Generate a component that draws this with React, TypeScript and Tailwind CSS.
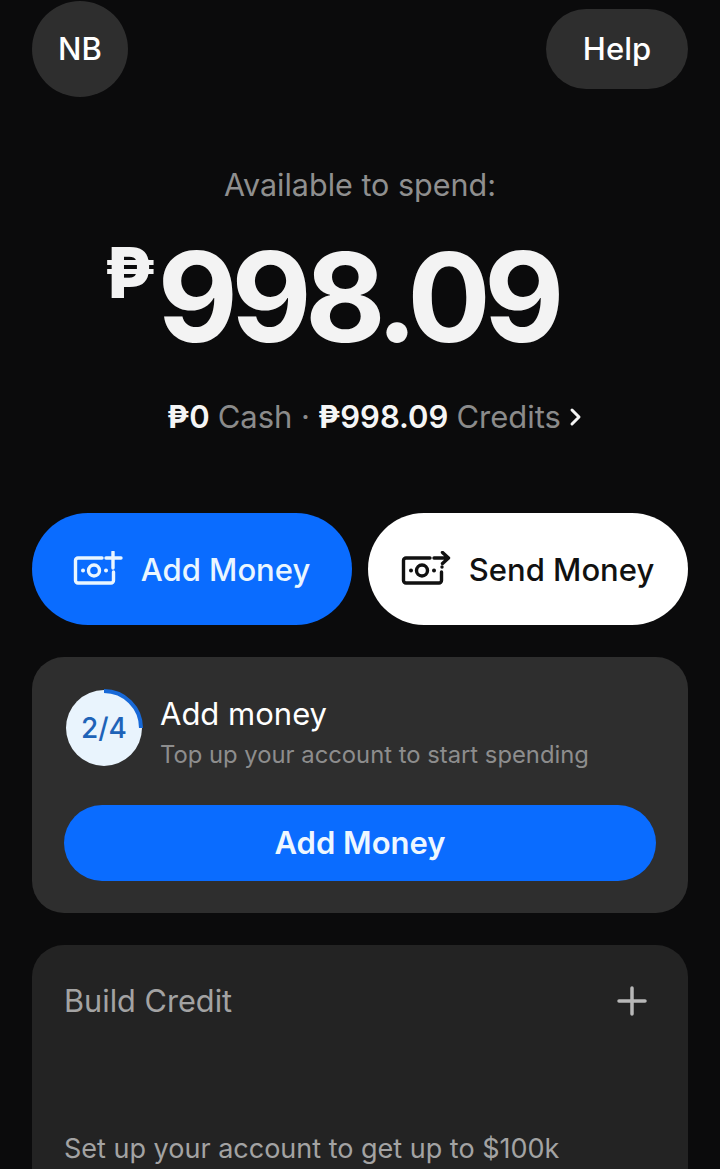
const sans = "font-['Inter','Noto_Sans',sans-serif]";

const MoneyIcon = ({ kind }: { kind: "plus" | "send" }) => (
  <svg width="50" height="36" viewBox="0 0 50 36" fill="none" stroke="currentColor" strokeWidth="3.400" strokeLinecap="round" strokeLinejoin="round">
    <path d="M29 7H5a2.500 2.500 0 0 0-2.500 2.500v20A2.500 2.500 0 0 0 5 32h33a2.500 2.500 0 0 0 2.500-2.500V21" />
    <circle cx="21" cy="19.500" r="5.500" />
    <path d="M10 19.500h.01M33 19.500h.01" strokeWidth="4" />
    {kind === "plus" ? (
      <path d="M33 7h15M40 1v16" />
    ) : (
      <>
        <path d="M33 7h14M41.500 1.500l6 5.500-6 5.500" />
        <path d="M41 16h.01" strokeWidth="3.400" />
      </>
    )}
  </svg>
);

const Peso = ({ className = "" }: { className?: string }) => (
  <span className={className}>₱</span>
);

export default function App() {
  return (
    <div className={`${sans} relative h-[1169px] w-[720px] overflow-hidden bg-[#0b0b0c] px-8`}>
      <div className="flex items-start justify-between pt-px">
        <div className="flex h-[96px] w-[96px] items-center justify-center rounded-full bg-[#2e2e2e] text-[31px] font-[540] text-white">NB</div>
        <div className="mt-2 flex h-[80px] w-[142px] items-center justify-center rounded-full bg-[#2e2e2e] text-[31px] font-[540] text-white">Help</div>
      </div>

      <p className="mt-[66px] text-center text-[30.500px] leading-[44px] text-[#8f8f8f]">Available to spend:</p>

      <div className="mt-[18px] flex h-[136px] items-start pl-[72px]">
        <span className="mt-[12px] text-[70px] leading-[72px] font-extrabold text-[#f3f3f3]">₱</span>
        <span className="mt-[4px] ml-[2px] text-[124px] leading-[136px] font-bold tracking-[-6.800px] text-[#f3f3f3]">998.09</span>
      </div>

      <div className="mt-[34px] flex items-center pl-[135px] text-[31px] leading-[44px] text-[#8b8b8b]">
        <Peso className="font-bold text-[#f5f5f5]" />
        <span className="font-semibold text-[#f5f5f5]">0</span>
        <span className="ml-2">Cash ·</span>
        <span className="ml-2 font-semibold text-[#f5f5f5]"><Peso className="font-bold" />998.09</span>
        <span className="ml-2">Credits</span>
        <svg className="ml-2" width="14" height="20" viewBox="0 0 14 20" fill="none" stroke="#f5f5f5" strokeWidth="3" strokeLinecap="round" strokeLinejoin="round">
          <path d="M3 3l7 7-7 7" />
        </svg>
      </div>

      <div className="mt-[74px] flex gap-4">
        <div className="flex h-[112px] w-[320px] items-center justify-center gap-[18px] rounded-full bg-[#0a6cff] pr-[1px] text-[#eaf6ff]">
          <MoneyIcon kind="plus" />
          <span className="pt-[2px] text-[31px] font-[520]">Add Money</span>
        </div>
        <div className="flex h-[112px] w-[320px] items-center justify-center gap-[18px] rounded-full bg-white pr-[1px] text-[#111]">
          <MoneyIcon kind="send" />
          <span className="pt-[2px] text-[31px] font-[520]">Send Money</span>
        </div>
      </div>

      <div className="mt-8 h-[256px] rounded-[32px] bg-[#2e2e2e] px-8 pt-8">
        <div className="flex gap-[18px]">
          <div className="relative ml-[2px] mt-[1px] flex h-[76px] w-[76px] items-center justify-center rounded-full bg-[#e9f4fd] text-[28px] font-[540] text-[#1e63b8]">
            2/4
            <svg className="absolute -left-[1px] -top-[1px]" width="78" height="78" viewBox="0 0 78 78" fill="none">
              <path d="M39 2a37 37 0 0 1 37 37" stroke="#1769d8" strokeWidth="4" />
            </svg>
          </div>
          <div className="pt-[3px]">
            <p className="text-[31px] leading-[44px] text-white">Add money</p>
            <p className="text-[23.800px] leading-[38px] text-[#8d8d8d]">Top up your account to start spending</p>
          </div>
        </div>
        <div className="mt-[31px] flex h-[76px] items-center justify-center rounded-full bg-[#0a6cff] text-[31px] font-semibold text-[#eef7ff]">Add Money</div>
      </div>

      <div className="mt-8 h-[300px] rounded-[32px] bg-[#232323] px-8 pt-[34px]">
        <div className="flex items-center justify-between">
          <p className="text-[30.700px] leading-[44px] text-[#a3a3a3]">Build Credit</p>
          <svg className="mr-[9px]" width="30" height="30" viewBox="0 0 30 30" fill="none" stroke="#b8b8b8" strokeWidth="3.500" strokeLinecap="round">
            <path d="M15 2v26M2 15h26" />
          </svg>
        </div>
        <p className="mt-[104px] text-[27px] leading-[44px] text-[#a3a3a3]">Set up your account to get up to $100k</p>
      </div>
    </div>
  );
}
